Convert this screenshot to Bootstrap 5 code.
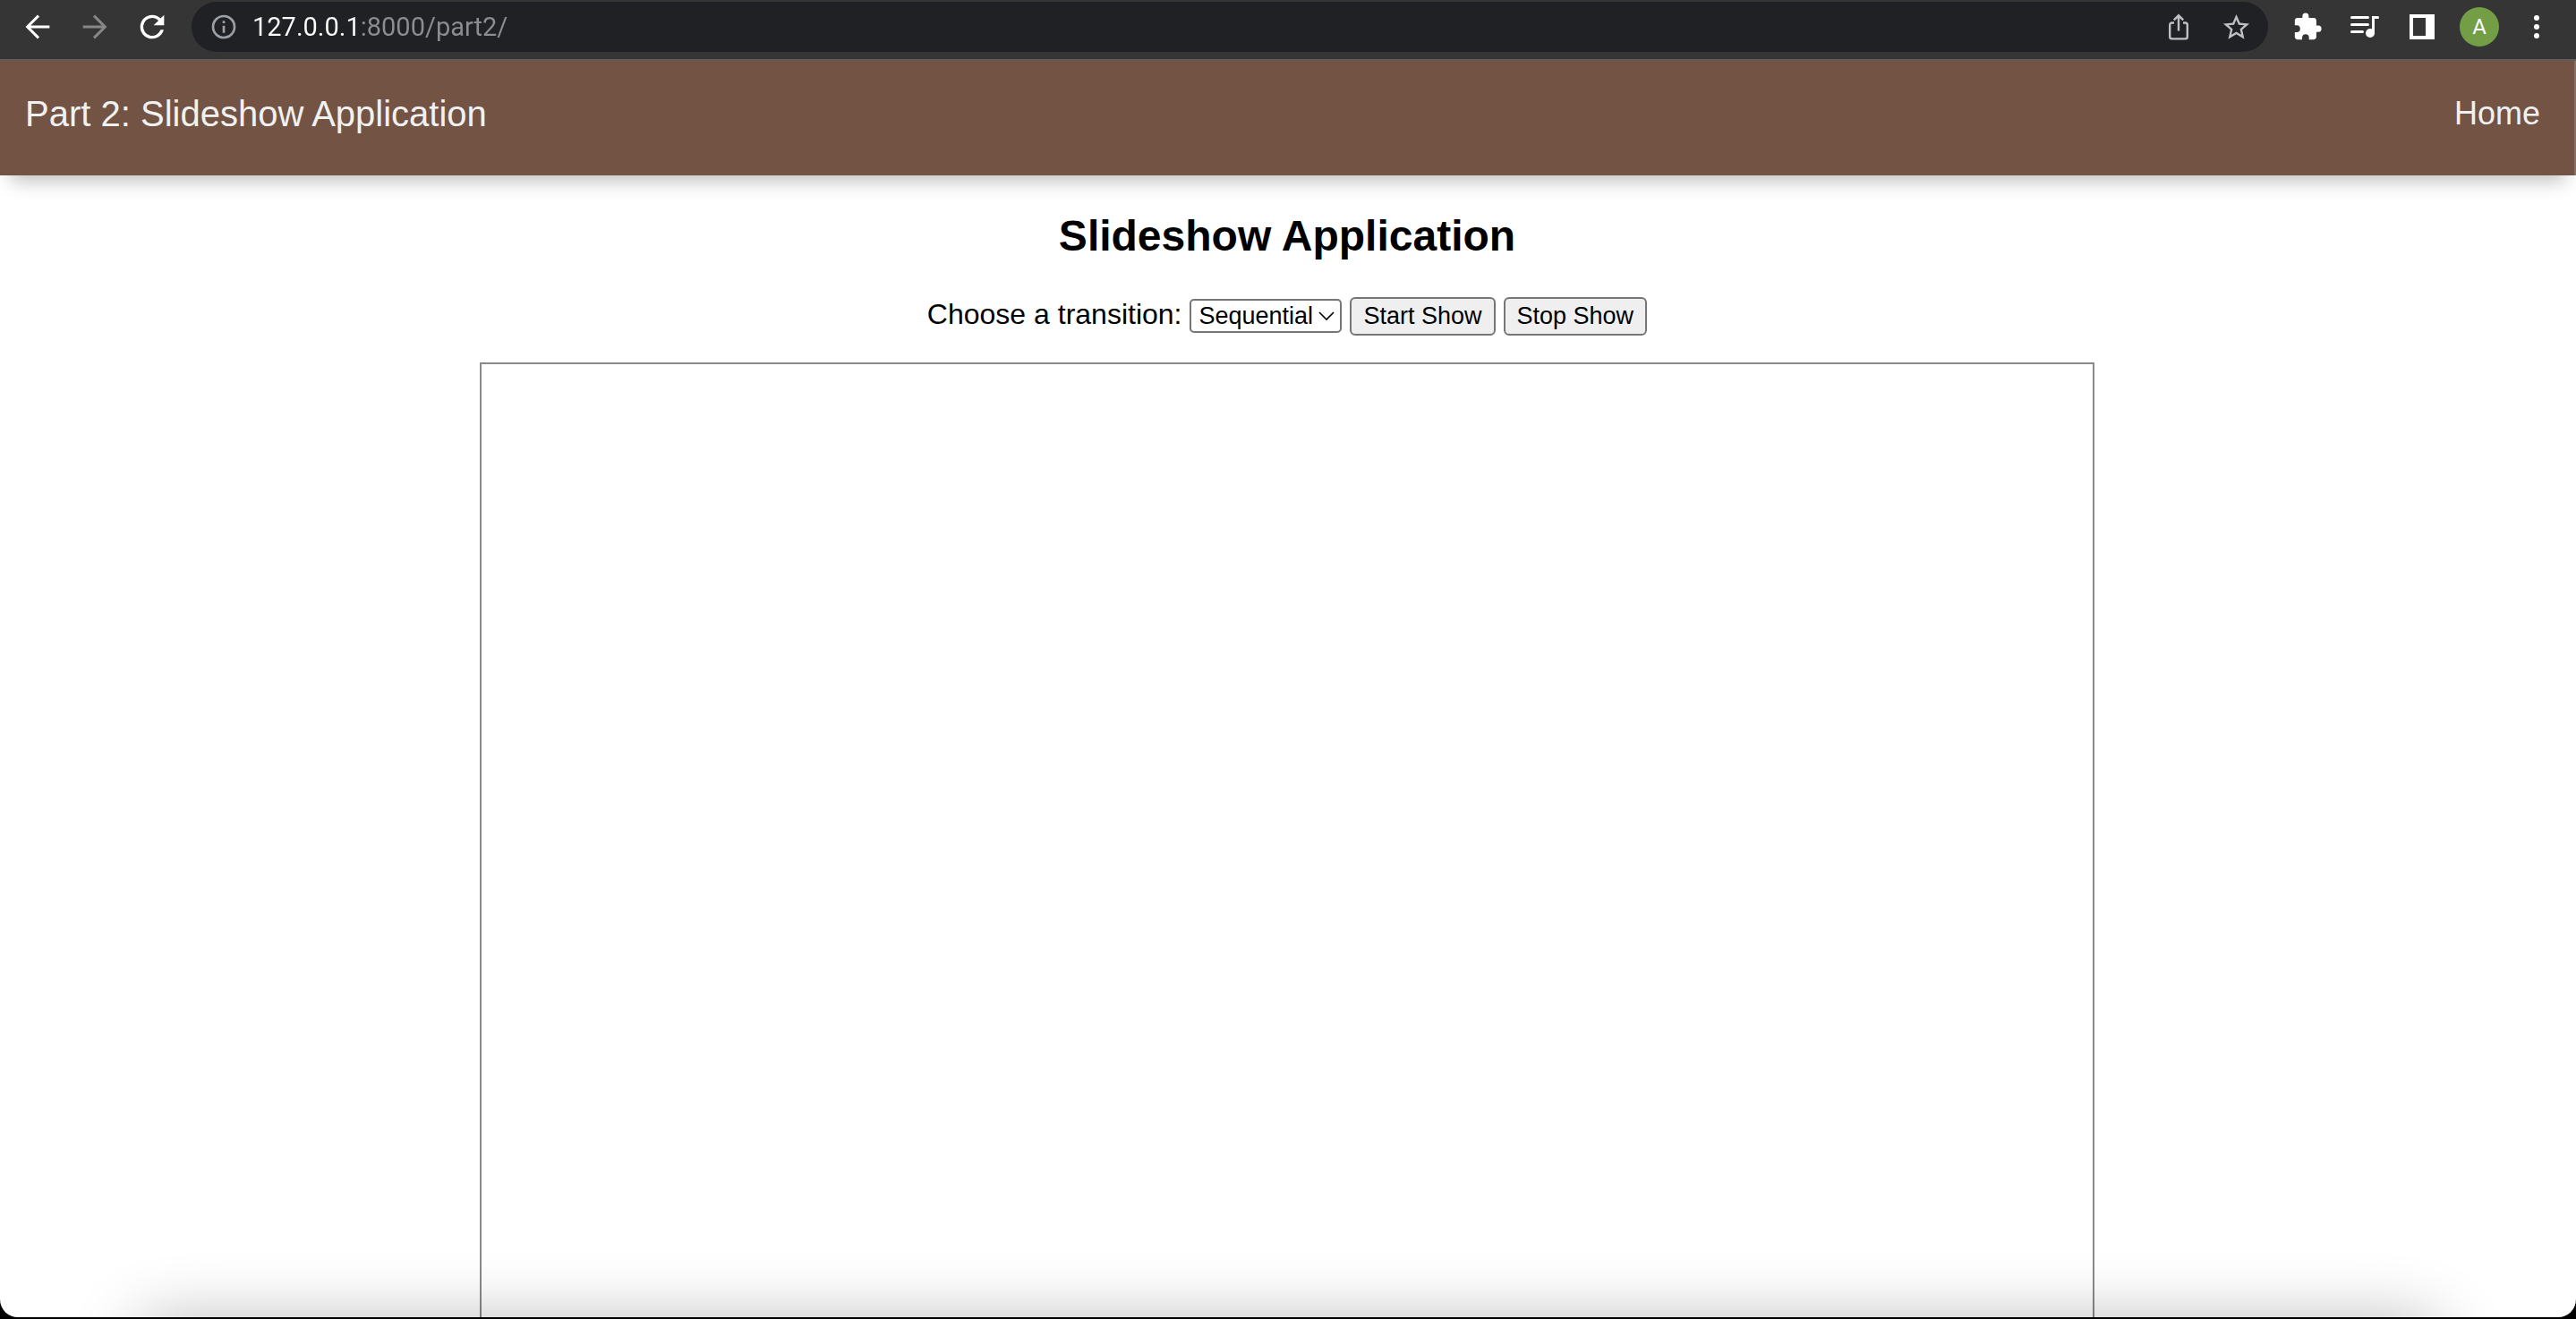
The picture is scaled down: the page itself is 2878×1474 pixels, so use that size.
<!DOCTYPE html>
<html lang="en">
<head>
<meta charset="utf-8">
<meta name="viewport" content="width=device-width, initial-scale=1">
<title>Slideshow Application</title>
<link rel="stylesheet" href="https://cdn.jsdelivr.net/npm/bootstrap@5.3.0/dist/css/bootstrap.min.css">
<style>
  body { background: #000; color: #000; font-family: "Liberation Sans", Arial, sans-serif; font-size: 32px; padding-bottom: 2px; }
  .browser-window { background: #fff; border-radius: 0 0 20px 20px; }

  /* browser toolbar */
  .browser-bar { background: #353535; border-bottom: 2px solid #5d5d5d; padding: 2px 12px 8px 10px; gap: 12px; }
  .tool-btn { width: 64px; height: 56px; padding: 0; border: 0; background: none; color: #fff; display: flex; align-items: center; justify-content: center; flex: none; }
  .tool-btn:disabled { color: #878787; }
  .omnibox { background: #202124; border-radius: 28px; padding: 0 4px; height: 56px; }
  .omnibox .tool-btn { color: #bdc1c6; }
  .omnibox .site-info { color: #9aa0a6; }
  .url-field { font-family: Roboto, sans-serif; font-size: 29px; line-height: 36px; border: 0; padding: 0; outline: 0; color: #fff;
    background: linear-gradient(to right, #fff 120px, #8c8d8f 120px); -webkit-background-clip: text; background-clip: text; -webkit-text-fill-color: transparent; }
  .profile-dot { width: 44px; height: 44px; background: #739e46; font-family: Roboto, sans-serif; font-size: 24px; line-height: 44px; }

  /* page */
  .site-header { background: #735444; height: 128px; padding: 0 38px 10px 28px; border-right: 2px solid #8a7165; box-shadow: 0 18px 20px -12px rgba(0, 0, 0, .26); }
  .site-header a { color: #f1f1f1; text-decoration: none; }
  .site-title { font-size: 40px; line-height: 48px; }
  .site-link { font-size: 36px; line-height: 48px; }
  .page-body { padding-right: 2px; }
  .page-title { font-size: 48px; line-height: 56px; font-weight: 700; margin: 40px 0; }
  .show-controls { gap: 9px; line-height: 38px; margin-bottom: 30px; }
  .show-select, .show-btn { font-size: 27px; border: 2px solid #767676; color: #000; }
  .show-select { width: 170px; height: 38px; line-height: 34px; padding: 0 28px 0 8px; border-radius: 5px; background-color: #fff; background-size: 18px 12px; background-position: right 6px center;
    background-image: url("data:image/svg+xml,%3Csvg xmlns='http://www.w3.org/2000/svg' viewBox='0 0 18 12'%3E%3Cpath d='M1 2l8 8 8-8' fill='none' stroke='%23000' stroke-width='1.6'/%3E%3C/svg%3E"); }
  .show-btn { background: #efefef; padding: 0 13px; line-height: 39px; border-radius: 6px; }
  .slide-frame { width: 1804px; max-width: 96%; border: 2px solid #8a8a8a; border-bottom: 0; }
  .dock-glow { left: 150px; right: 150px; bottom: -68px; height: 60px; box-shadow: 0 0 76px rgba(0, 0, 0, .32); border-radius: 30px; pointer-events: none; }
</style>
</head>
<body class="vh-100 overflow-hidden">
<div class="browser-window h-100 d-flex flex-column position-relative overflow-hidden">
  <div class="browser-bar d-flex align-items-center">
    <div class="d-flex">
      <button class="tool-btn" type="button" aria-label="Back"><svg width="40" height="40" viewBox="0 0 24 24" fill="none" stroke="currentColor" stroke-width="1.8"><path d="M20 12H5.3M12.6 4.6L5.2 12l7.4 7.4"/></svg></button>
      <button class="tool-btn" type="button" aria-label="Forward" disabled><svg width="40" height="40" viewBox="0 0 24 24" fill="none" stroke="currentColor" stroke-width="1.8"><path d="M4 12h14.7M11.4 4.6l7.4 7.4-7.4 7.4"/></svg></button>
      <button class="tool-btn" type="button" aria-label="Reload"><svg width="40" height="40" viewBox="0 0 24 24" fill="currentColor"><path d="M17.65 6.35A7.96 7.96 0 0 0 12 4a8 8 0 1 0 7.73 10h-2.08A6 6 0 1 1 12 6c1.66 0 3.14.69 4.22 1.78L13 11h7V4z"/></svg></button>
    </div>
    <div class="omnibox d-flex align-items-center flex-grow-1">
      <button class="tool-btn site-info" type="button" aria-label="Site information"><svg width="32" height="32" viewBox="0 0 24 24" fill="currentColor"><path d="M11 7h2v2h-2zm0 4h2v6h-2zm1-9a10 10 0 1 0 0 20 10 10 0 0 0 0-20zm0 18a8 8 0 1 1 0-16 8 8 0 0 1 0 16z"/></svg></button>
      <input class="url-field flex-grow-1" type="text" value="127.0.0.1:8000/part2/" aria-label="Address" spellcheck="false">
      <button class="tool-btn" type="button" aria-label="Share"><svg width="24" height="30" viewBox="0 0 24 30" fill="none" stroke="currentColor" stroke-width="2.4"><path d="M7 10.5H4.500a2.300 2.300 0 0 0-2.300 2.300v13.300a2.300 2.300 0 0 0 2.300 2.300h15a2.300 2.300 0 0 0 2.300-2.300V12.800a2.300 2.300 0 0 0-2.300-2.300H17M12 19.500V3M6.800 7.400L12 2.300l5.200 5.100"/></svg></button>
      <button class="tool-btn" type="button" aria-label="Bookmark"><svg width="35" height="35" viewBox="0 0 24 24" fill="currentColor"><path d="M22 9.240l-7.190-.62L12 2 9.190 8.630 2 9.240l5.460 4.730L5.820 21 12 17.270 18.180 21l-1.630-7.030zM12 15.400l-3.760 2.270 1-4.280-3.320-2.880 4.380-.38L12 6.100l1.710 4.040 4.380.38-3.320 2.880 1 4.280z"/></svg></button>
    </div>
    <div class="d-flex">
      <button class="tool-btn" type="button" aria-label="Extensions"><svg width="34" height="34" viewBox="0 0 24 24" fill="currentColor"><path d="M20.500 11H19V7c0-1.100-.9-2-2-2h-4V3.500a2.500 2.500 0 0 0-5 0V5H4c-1.100 0-1.990.9-1.990 2v3.800H3.500a2.700 2.700 0 0 1 0 5.400H2V20c0 1.100.9 2 2 2h3.800v-1.500a2.700 2.700 0 0 1 5.400 0V22H17c1.100 0 2-.9 2-2v-4h1.500a2.500 2.500 0 0 0 0-5z"/></svg></button>
      <button class="tool-btn" type="button" aria-label="Media controls"><svg width="32" height="26" viewBox="0 0 32 26" fill="none" stroke="currentColor" stroke-width="3" stroke-linecap="round"><path d="M1.500 2.500h18M1.500 10.500h18M1.500 18.500h12"/><path d="M25.500 20V2.500h5"/><circle cx="22" cy="20" r="5" fill="currentColor" stroke="none"/></svg></button>
      <button class="tool-btn" type="button" aria-label="Side panel"><svg width="28" height="28" viewBox="0 0 28 28" fill="currentColor"><path fill-rule="evenodd" d="M0 0h28v28H0zM4 4v20h14V4z"/></svg></button>
      <button class="tool-btn" type="button" aria-label="Profile"><span class="profile-dot rounded-circle text-center">A</span></button>
      <button class="tool-btn" type="button" aria-label="Menu"><svg width="8" height="28" viewBox="0 0 8 28" fill="currentColor"><circle cx="4" cy="4" r="3"/><circle cx="4" cy="14" r="3"/><circle cx="4" cy="24" r="3"/></svg></button>
    </div>
  </div>

  <header class="site-header d-flex align-items-center justify-content-between">
    <a class="site-title" href="#">Part 2: Slideshow Application</a>
    <nav><a class="site-link" href="#">Home</a></nav>
  </header>

  <main class="page-body flex-grow-1 d-flex flex-column align-items-center">
    <h2 class="page-title">Slideshow Application</h2>
    <form class="show-controls d-flex align-items-baseline">
      <label for="transition">Choose a transition:</label>
      <select class="form-select show-select" id="transition">
        <option selected>Sequential</option>
        <option>Random</option>
      </select>
      <button class="show-btn" type="button">Start Show</button>
      <button class="show-btn" type="button">Stop Show</button>
    </form>
    <div class="slide-frame flex-grow-1"></div>
  </main>
  <div class="dock-glow position-absolute"></div>
</div>
<script src="https://cdn.jsdelivr.net/npm/bootstrap@5.3.0/dist/js/bootstrap.bundle.min.js"></script>
</body>
</html>
